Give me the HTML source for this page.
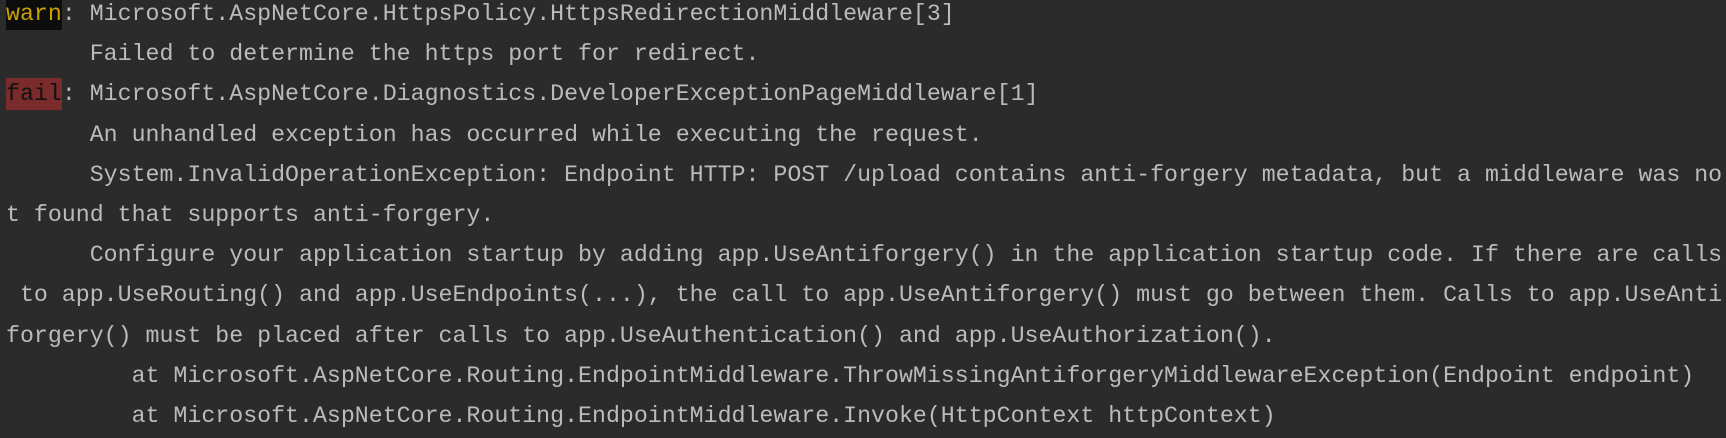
<!DOCTYPE html>
<html><head><meta charset="utf-8"><style>
html,body{margin:0;padding:0;background:#2b2b2b;width:1726px;height:438px;overflow:hidden}
pre{margin:0;position:absolute;top:-6px;left:6px;font-family:"Liberation Mono","DejaVu Sans Mono",monospace;font-size:23.25px;line-height:40.2px;color:#bbbbbb;white-space:pre}
.w{background:#0d0d0d;color:#c8a100;padding:3px 0}
.f{background:#7a2b2b;color:#111;padding:3px 0}
</style></head><body>
<pre><span class="w">warn</span>: Microsoft.AspNetCore.HttpsPolicy.HttpsRedirectionMiddleware[3]
      Failed to determine the https port for redirect.
<span class="f">fail</span>: Microsoft.AspNetCore.Diagnostics.DeveloperExceptionPageMiddleware[1]
      An unhandled exception has occurred while executing the request.
      System.InvalidOperationException: Endpoint HTTP: POST /upload contains anti-forgery metadata, but a middleware was no
t found that supports anti-forgery.
      Configure your application startup by adding app.UseAntiforgery() in the application startup code. If there are calls
 to app.UseRouting() and app.UseEndpoints(...), the call to app.UseAntiforgery() must go between them. Calls to app.UseAnti
forgery() must be placed after calls to app.UseAuthentication() and app.UseAuthorization().
         at Microsoft.AspNetCore.Routing.EndpointMiddleware.ThrowMissingAntiforgeryMiddlewareException(Endpoint endpoint)
         at Microsoft.AspNetCore.Routing.EndpointMiddleware.Invoke(HttpContext httpContext)</pre>
</body></html>
